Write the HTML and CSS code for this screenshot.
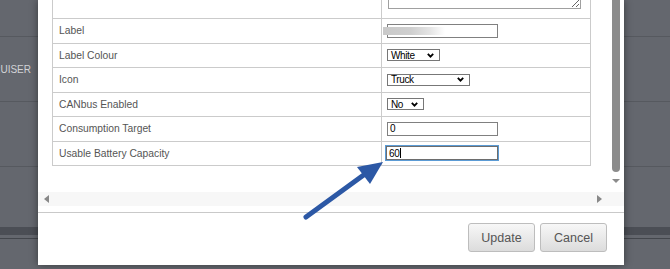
FILE: index.html
```html
<!DOCTYPE html>
<html>
<head>
<meta charset="utf-8">
<link rel="stylesheet" href="styles.css">
</head>
<body>
<div class="page">
  <div class="bg-row r1"></div>
  <div class="bg-row r2"><div class="bg-cell"><span>CRUISER</span></div></div>
  <div class="bg-row r3"></div>
  <div class="bg-row r4"></div>
  <div class="bg-band"></div>
  <div class="bg-gap"></div>
  <div class="bg-line"></div>
</div>
<div class="dialog">
  <div class="scrollarea">
    <div class="viewport">
      <div class="form">
        <div class="row notes"><div class="lbl">Notes</div><div class="val"><textarea></textarea></div></div>
        <div class="row"><div class="lbl">Label</div><div class="val"><div class="inp"><span class="blur"></span></div></div></div>
        <div class="row"><div class="lbl">Label Colour</div><div class="val"><div class="select sel-white"><span>White</span><svg class="chev" width="7" height="5" viewBox="0 0 7 5"><polyline points="0.8,0.8 3.5,3.6 6.2,0.8" fill="none" stroke="#000" stroke-width="1.8"/></svg></div></div></div>
        <div class="row"><div class="lbl">Icon</div><div class="val"><div class="select sel-truck"><span>Truck</span><svg class="chev" width="7" height="5" viewBox="0 0 7 5"><polyline points="0.8,0.8 3.5,3.6 6.2,0.8" fill="none" stroke="#000" stroke-width="1.8"/></svg></div></div></div>
        <div class="row"><div class="lbl">CANbus Enabled</div><div class="val"><div class="select sel-no"><span>No</span><svg class="chev" width="7" height="5" viewBox="0 0 7 5"><polyline points="0.8,0.8 3.5,3.6 6.2,0.8" fill="none" stroke="#000" stroke-width="1.8"/></svg></div></div></div>
        <div class="row"><div class="lbl">Consumption Target</div><div class="val"><div class="inp">0</div></div></div>
        <div class="row"><div class="lbl">Usable Battery Capacity</div><div class="val"><div class="inp focus">60<span class="caret"></span></div></div></div>
      </div>
    </div>
    <div class="vbar"><div class="thumb"></div><div class="arr-down"></div></div>
    <div class="hbar"><span class="arr-left"></span><span class="arr-right"></span></div>
  </div>
  <div class="footer"><button class="btn">Update</button><button class="btn">Cancel</button></div>
</div>
<svg class="pointer" width="670" height="269" viewBox="0 0 670 269">
  <line x1="306" y1="217" x2="365" y2="174" stroke="#2c58a5" stroke-width="5" stroke-linecap="round"/>
  <polygon points="383,162 357,167 370,184" fill="#2c58a5"/>
</svg>
</body>
</html>
```
FILE: styles.css
```css
html, body {
  margin: 0;
  height: 269px;
  overflow: hidden;
}
body {
  background: #64676e;
  font-family: "Liberation Sans", Arial, sans-serif;
  position: relative;
}
.bg-row {
  box-sizing: border-box;
  border-bottom: 1px solid #56595f;
}
.r1 { height: 37px; }
.r2 { height: 65px; display: flex; align-items: center; }
.r3 { height: 65px; }
.r4 { height: 60px; border-bottom: 0; }
.bg-band { height: 8px; background: #4b4e55; }
.bg-gap { height: 3px; }
.bg-line { height: 1px; background: #43464c; }
.bg-cell {
  width: 31px;
  display: flex;
  justify-content: flex-end;
  white-space: nowrap;
  color: #d2d3d6;
  font-size: 10px;
}

.dialog {
  position: absolute;
  left: 38px;
  top: 0;
  width: 586px;
  height: 265px;
  background: #fff;
  box-shadow: 0 0 8px rgba(0, 0, 0, 0.45);
}
.scrollarea {
  display: grid;
  grid-template-columns: 574px 12px;
  grid-template-rows: 192px 14px 6px;
  border-bottom: 1px solid #c9c9c9;
}
.viewport {
  overflow: hidden;
}
.form {
  margin: -32px 0 0 14px;
  width: 539px;
  box-sizing: border-box;
  border: 1px solid #cbcbcb;
  border-bottom: 0;
}
.row {
  display: grid;
  grid-template-columns: 329px 1fr;
  height: 24.5px;
  box-sizing: border-box;
  border-bottom: 1px solid #cbcbcb;
}
.row.notes { height: 50px; }
.lbl {
  border-right: 1px solid #cbcbcb;
  padding-left: 6px;
  display: flex;
  align-items: center;
  color: #555;
  font-size: 10.3px;
}
.val {
  display: flex;
  align-items: center;
  padding-left: 5px;
}
.notes .val {
  align-items: flex-end;
  padding-bottom: 9px;
  padding-left: 6px;
}
textarea {
  display: block;
  width: 193px;
  height: 40px;
  margin: 0;
  padding: 0;
  box-sizing: border-box;
  border: 1px solid #a0a0a0;
}
.inp {
  position: relative;
  width: 111px;
  height: 14px;
  box-sizing: border-box;
  border: 1px solid #808080;
  padding-left: 2px;
  display: flex;
  align-items: center;
  font-size: 10px;
  letter-spacing: -0.3px;
  color: #000;
}
.inp.focus {
  width: 112px;
  margin-left: -1px;
  outline: 1px solid #5b9bd5;
  border-color: #6d6d6d;
}
.caret {
  width: 1px;
  height: 10px;
  background: #000;
  margin-left: 0.5px;
}
.blur {
  position: absolute;
  left: -5px;
  top: 2px;
  width: 62px;
  height: 8px;
  background: linear-gradient(90deg, #c9c9c9 0%, #cfcfcf 45%, #e4e4e4 75%, rgba(255, 255, 255, 0) 100%);
}
.select {
  height: 12px;
  box-sizing: border-box;
  border: 1px solid #777;
  display: flex;
  align-items: center;
  justify-content: space-between;
  padding: 0 5px 0 3px;
  font-size: 10px;
  letter-spacing: -0.4px;
  color: #000;
}
.sel-white { width: 53px; }
.sel-truck { width: 83px; }
.sel-no { width: 37px; }
.chev { display: block; }

.vbar {
  grid-column: 2;
  grid-row: 1;
}
.thumb {
  width: 8px;
  height: 172px;
  background: #8b8b8b;
  border-radius: 0 0 4px 4px;
}
.arr-down {
  margin-top: 7px;
  width: 0;
  height: 0;
  border-left: 4px solid transparent;
  border-right: 4px solid transparent;
  border-top: 4px solid #8b8b8b;
}
.hbar {
  grid-column: 1 / 3;
  grid-row: 2;
  background: #f7f7f7;
  display: flex;
  align-items: center;
  justify-content: space-between;
  padding: 0 22px 0 6px;
}
.arr-left {
  width: 0;
  height: 0;
  border-top: 4px solid transparent;
  border-bottom: 4px solid transparent;
  border-right: 5px solid #888;
}
.arr-right {
  width: 0;
  height: 0;
  border-top: 4px solid transparent;
  border-bottom: 4px solid transparent;
  border-left: 5px solid #888;
}
.footer {
  display: flex;
  justify-content: flex-end;
  align-items: flex-start;
  gap: 5px;
  padding: 10px 17px 0 0;
}
.btn {
  width: 67px;
  height: 29px;
  padding: 0;
  border: 1px solid #bdbdbd;
  border-radius: 3px;
  background: linear-gradient(#f7f7f7, #dcdcdc);
  font-family: "Liberation Sans", Arial, sans-serif;
  font-size: 12.5px;
  color: #555;
}
.pointer {
  position: absolute;
  left: 0;
  top: 0;
  pointer-events: none;
}
```
